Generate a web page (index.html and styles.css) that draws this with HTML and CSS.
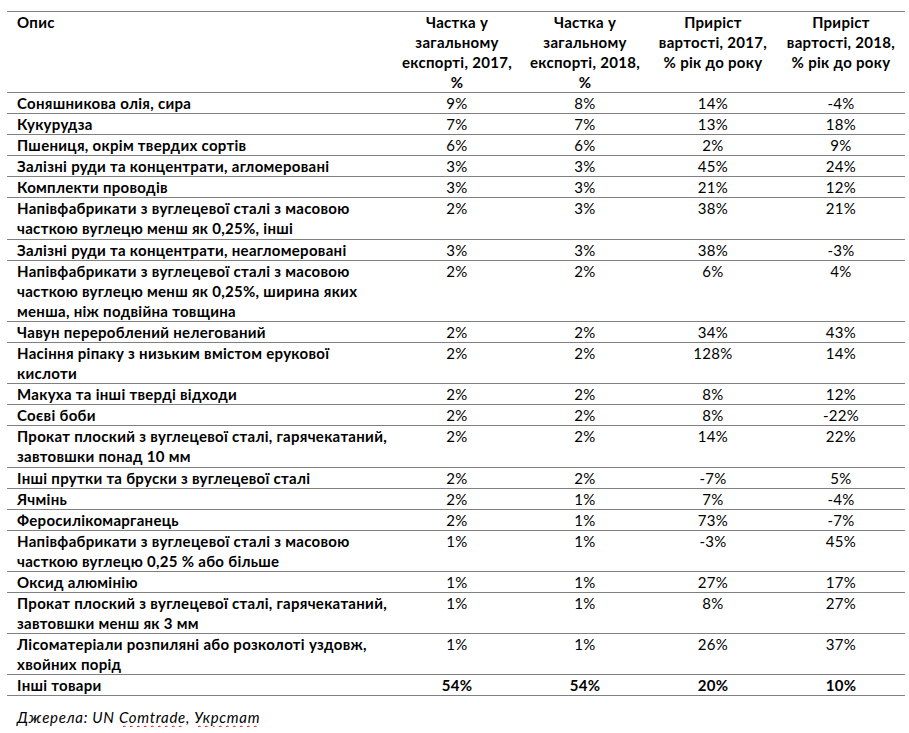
FILE: index.html
```html
<!DOCTYPE html>
<html lang="uk">
<head>
<meta charset="utf-8">
<title>Експорт</title>
<link rel="stylesheet" href="styles.css">
</head>
<body>
<table class="export">
  <thead>
    <tr>
      <th class="desc">Опис</th>
      <th>Частка у<br>загальному<br>експорті, 2017,<br>%</th>
      <th>Частка у<br>загальному<br>експорті, 2018,<br>%</th>
      <th>Приріст<br>вартості, 2017,<br>% рік до року</th>
      <th>Приріст<br>вартості, 2018,<br>% рік до року</th>
    </tr>
  </thead>
  <tbody>
    <tr><td class="desc">Соняшникова олія, сира</td><td>9%</td><td>8%</td><td>14%</td><td>-4%</td></tr>
    <tr><td class="desc">Кукурудза</td><td>7%</td><td>7%</td><td>13%</td><td>18%</td></tr>
    <tr><td class="desc">Пшениця, окрім твердих сортів</td><td>6%</td><td>6%</td><td>2%</td><td>9%</td></tr>
    <tr><td class="desc">Залізні руди та концентрати, агломеровані</td><td>3%</td><td>3%</td><td>45%</td><td>24%</td></tr>
    <tr><td class="desc">Комплекти проводів</td><td>3%</td><td>3%</td><td>21%</td><td>12%</td></tr>
    <tr class="extra"><td class="desc">Напівфабрикати з вуглецевої сталі з масовою<br>часткою вуглецю менш як 0,25%, інші</td><td>2%</td><td>3%</td><td>38%</td><td>21%</td></tr>
    <tr><td class="desc">Залізні руди та концентрати, неагломеровані</td><td>3%</td><td>3%</td><td>38%</td><td>-3%</td></tr>
    <tr><td class="desc">Напівфабрикати з вуглецевої сталі з масовою<br>часткою вуглецю менш як 0,25%, ширина яких<br>менша, ніж подвійна товщина</td><td>2%</td><td>2%</td><td>6%</td><td>4%</td></tr>
    <tr><td class="desc">Чавун перероблений нелегований</td><td>2%</td><td>2%</td><td>34%</td><td>43%</td></tr>
    <tr><td class="desc">Насіння ріпаку з низьким вмістом ерукової<br>кислоти</td><td>2%</td><td>2%</td><td>128%</td><td>14%</td></tr>
    <tr><td class="desc">Макуха та інші тверді відходи</td><td>2%</td><td>2%</td><td>8%</td><td>12%</td></tr>
    <tr><td class="desc">Соєві боби</td><td>2%</td><td>2%</td><td>8%</td><td>-22%</td></tr>
    <tr class="extra"><td class="desc">Прокат плоский з вуглецевої сталі, гарячекатаний,<br>завтовшки понад 10 мм</td><td>2%</td><td>2%</td><td>14%</td><td>22%</td></tr>
    <tr><td class="desc">Інші прутки та бруски з вуглецевої сталі</td><td>2%</td><td>2%</td><td>-7%</td><td>5%</td></tr>
    <tr><td class="desc">Ячмінь</td><td>2%</td><td>1%</td><td>7%</td><td>-4%</td></tr>
    <tr><td class="desc">Феросилікомарганець</td><td>2%</td><td>1%</td><td>73%</td><td>-7%</td></tr>
    <tr><td class="desc">Напівфабрикати з вуглецевої сталі з масовою<br>часткою вуглецю 0,25 % або більше</td><td>1%</td><td>1%</td><td>-3%</td><td>45%</td></tr>
    <tr><td class="desc">Оксид алюмінію</td><td>1%</td><td>1%</td><td>27%</td><td>17%</td></tr>
    <tr><td class="desc">Прокат плоский з вуглецевої сталі, гарячекатаний,<br>завтовшки менш як 3 мм</td><td>1%</td><td>1%</td><td>8%</td><td>27%</td></tr>
    <tr><td class="desc">Лісоматеріали розпиляні або розколоті уздовж,<br>хвойних порід</td><td>1%</td><td>1%</td><td>26%</td><td>37%</td></tr>
    <tr class="total"><td class="desc">Інші товари</td><td>54%</td><td>54%</td><td>20%</td><td>10%</td></tr>
  </tbody>
</table>
<p class="source">Джерела: UN <span class="spell">Comtrade</span>, <span class="spell">Укрстат</span></p>
</body>
</html>
```

FILE: styles.css
```css
html, body {
  margin: 0;
  padding: 0;
  background: #ffffff;
}

body {
  font-family: Lato, "Noto Sans", "Liberation Sans", sans-serif;
  font-size: 15px;
  letter-spacing: 0.3px;
  color: #000000;
}

.export {
  margin: 11px 0 0 7px;
  width: 898px;
  border-collapse: collapse;
  table-layout: fixed;
}

.export th,
.export td {
  padding: 0 4px;
  line-height: 20px;
  vertical-align: top;
  text-align: center;
  border-bottom: 1px solid #808080;
  width: 120px;
}

.export thead th {
  border-top: 1px solid #808080;
  font-weight: bold;
}

.export .desc {
  width: 376px;
  padding-left: 10px;
  padding-right: 0;
  text-align: left;
  font-weight: bold;
}

.export .extra td {
  padding-bottom: 1px;
}

.export .total td {
  font-weight: bold;
}

.source {
  margin: 11px 0 0 17px;
  font-style: italic;
  letter-spacing: 0.7px;
  line-height: 20px;
}

.spell {
  text-decoration: underline wavy #e00000;
  text-decoration-thickness: 1px;
  text-underline-offset: 2px;
}
```
